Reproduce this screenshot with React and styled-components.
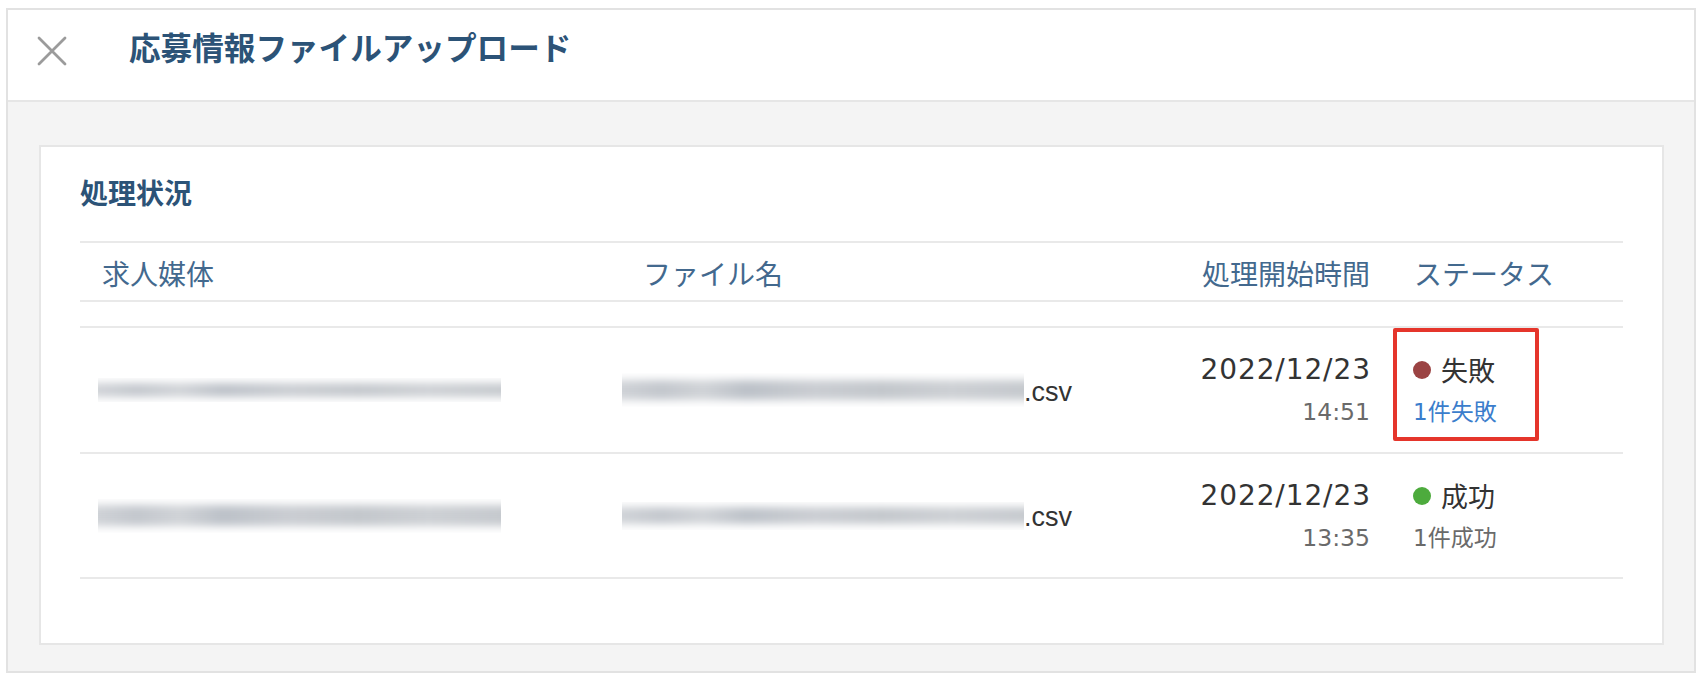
import React from 'react';
import styled, { createGlobalStyle } from 'styled-components';

const GlobalStyle = createGlobalStyle`
  body {
    margin: 0;
    background: #fff;
    font-family: "Noto Sans CJK JP", "Noto Sans", sans-serif;
  }
`;

const rows = [
  {
    id: 1,
    mediaWidth: 403,
    mediaHeight: 24,
    fileWidth: 402,
    fileHeight: 34,
    date: '2022/12/23',
    time: '14:51',
    status: '失敗',
    detail: '1件失敗',
    failed: true,
  },
  {
    id: 2,
    mediaWidth: 403,
    mediaHeight: 34,
    fileWidth: 402,
    fileHeight: 28,
    date: '2022/12/23',
    time: '13:35',
    status: '成功',
    detail: '1件成功',
    failed: false,
  },
];

function App() {
  return (
    <>
      <GlobalStyle />
      <Frame>
        <Header>
          <CloseButton aria-label="閉じる">
            <svg width="30" height="30" viewBox="0 0 30 30">
              <path d="M2 2 L28 28 M28 2 L2 28" stroke="#9b9b9b" strokeWidth="2.8" strokeLinecap="round" />
            </svg>
          </CloseButton>
          <Title>応募情報ファイルアップロード</Title>
        </Header>
        <Body>
          <Card>
            <SectionTitle>処理状況</SectionTitle>
            <HeadRow>
              <HeadCell>求人媒体</HeadCell>
              <HeadCell>ファイル名</HeadCell>
              <HeadCell $right>処理開始時間</HeadCell>
              <HeadCell>ステータス</HeadCell>
            </HeadRow>
            <Rows>
              {rows.map((row) => (
                <Row key={row.id}>
                  <Cell $pad="0 0 0 18px">
                    <Redacted $w={row.mediaWidth} $h={row.mediaHeight} />
                  </Cell>
                  <Cell $pad="0 0 0 1px">
                    <Redacted $w={row.fileWidth} $h={row.fileHeight} />
                    <Ext>.csv</Ext>
                  </Cell>
                  <DateCell>
                    <DateText>{row.date}</DateText>
                    <TimeText>{row.time}</TimeText>
                  </DateCell>
                  <StatusCell>
                    {row.failed && <Highlight />}
                    <StatusLine>
                      <Dot $failed={row.failed} />
                      {row.status}
                    </StatusLine>
                    <StatusDetail $failed={row.failed}>{row.detail}</StatusDetail>
                  </StatusCell>
                </Row>
              ))}
            </Rows>
          </Card>
        </Body>
      </Frame>
    </>
  );
}

const Frame = styled.div`
  margin: 8px 0 0 6px;
  width: 1690px;
  height: 665px;
  box-sizing: border-box;
  border: 2px solid #e2e2e2;
  background: #f4f4f4;
  display: flex;
  flex-direction: column;
`;

const Header = styled.div`
  height: 92px;
  box-sizing: border-box;
  background: #fff;
  border-bottom: 2px solid #e6e6e6;
  display: flex;
  align-items: center;
  padding: 0 0 8px 29px;
`;

const CloseButton = styled.div`
  width: 30px;
  height: 30px;
  display: flex;
  svg {
    display: block;
  }
`;

const Title = styled.h1`
  margin: 0 0 8px 62px;
  font-size: 31.6px;
  line-height: 1;
  font-weight: 700;
  color: #2c5377;
`;

const Body = styled.div`
  flex: 1;
  display: flex;
  flex-direction: column;
  padding: 43px 30px 26px 31px;
`;

const Card = styled.div`
  flex: 1;
  background: #fff;
  border: 2px solid #e6e6e6;
  padding: 25px 39px 0;
`;

const SectionTitle = styled.h2`
  margin: 0 0 29px;
  font-size: 28px;
  line-height: 40px;
  font-weight: 700;
  color: #2c5377;
`;

const columns = '541px 1fr 215px 231px';

const HeadRow = styled.div`
  display: grid;
  grid-template-columns: ${columns};
  height: 61px;
  box-sizing: border-box;
  border-top: 2px solid #e9e9e9;
  border-bottom: 2px solid #e9e9e9;
  align-items: center;
`;

const HeadCell = styled.div`
  padding: 2px 22px 0;
  font-size: 28px;
  line-height: 36px;
  color: #43698e;
  text-align: ${(p) => (p.$right ? 'right' : 'left')};
`;

const Rows = styled.div`
  margin-top: 24px;
`;

const Row = styled.div`
  display: grid;
  grid-template-columns: ${columns};
  height: 126px;
  box-sizing: border-box;
  border-top: 2px solid #e9e9e9;
  align-items: center;
  &:last-child {
    height: 127px;
    border-bottom: 2px solid #e9e9e9;
  }
`;

const Cell = styled.div`
  display: flex;
  align-items: center;
  padding: ${(p) => p.$pad};
`;

const Redacted = styled.span`
  display: inline-block;
  position: relative;
  overflow: hidden;
  flex-shrink: 0;
  width: ${(p) => p.$w}px;
  height: ${(p) => p.$h}px;
  &::before {
    content: '';
    position: absolute;
    left: -12px;
    right: -12px;
    top: 20%;
    bottom: 20%;
    background: linear-gradient(
      90deg,
      #d2d5d9 0%,
      #c3c7cd 12%,
      #d0d3d7 22%,
      #bcc1c8 32%,
      #cacdd2 48%,
      #c3c7cc 64%,
      #cdd0d4 80%,
      #c4c8cd 100%
    );
    filter: blur(4.5px);
  }
`;

const Ext = styled.span`
  font-family: "Liberation Sans", Arial, sans-serif;
  font-size: 27px;
  line-height: 1;
  color: #333;
  margin-top: 4px;
`;

const DateCell = styled.div`
  padding-right: 22px;
  text-align: right;
`;

const DateText = styled.div`
  font-family: "DejaVu Sans", "Noto Sans CJK JP", sans-serif;
  font-size: 28px;
  line-height: 44px;
  letter-spacing: 0.9px;
  margin-right: -0.9px;
  color: #333;
`;

const TimeText = styled.div`
  font-family: "DejaVu Sans", "Noto Sans CJK JP", sans-serif;
  font-size: 23.5px;
  line-height: 40px;
  color: #6a6a6a;
`;

const StatusCell = styled.div`
  position: relative;
  align-self: stretch;
  display: flex;
  flex-direction: column;
  justify-content: center;
  padding-left: 21px;
`;

const Highlight = styled.div`
  position: absolute;
  top: 0;
  left: 1px;
  width: 146px;
  height: 113px;
  box-sizing: border-box;
  border: 4px solid #e5352b;
  border-radius: 2px;
  pointer-events: none;
`;

const StatusLine = styled.div`
  display: flex;
  align-items: center;
  gap: 10px;
  font-size: 27px;
  line-height: 44px;
  color: #333;
`;

const Dot = styled.span`
  width: 18px;
  height: 18px;
  border-radius: 50%;
  background: ${(p) => (p.$failed ? '#9b4343' : '#4dab3d')};
`;

const StatusDetail = styled.div`
  font-family: "DejaVu Sans", "Noto Sans CJK JP", sans-serif;
  font-size: 23px;
  line-height: 40px;
  color: ${(p) => (p.$failed ? '#3b7dcc' : '#6a6a6a')};
`;

export default App;
